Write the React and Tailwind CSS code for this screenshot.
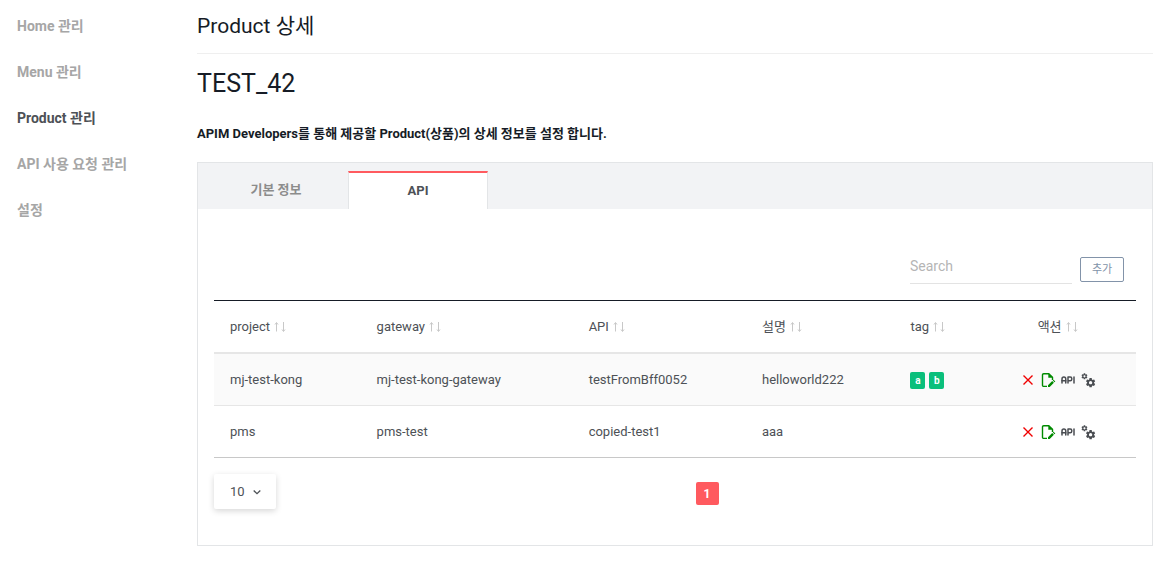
import { TbApi } from "react-icons/tb";

const menu = ["Home 관리", "Menu 관리", "Product 관리", "API 사용 요청 관리", "설정"];

const columns = [
  { name: "project", width: "w-[15.9%]" },
  { name: "gateway", width: "w-[23%]" },
  { name: "API", width: "w-[18.8%]" },
  { name: "설명", width: "w-[16.1%]" },
  { name: "tag", width: "w-[9.2%]" },
  { name: "액션", width: "w-[17%]" },
];

const rows = [
  { project: "mj-test-kong", gateway: "mj-test-kong-gateway", api: "testFromBff0052", desc: "helloworld222", tags: ["a", "b"] },
  { project: "pms", gateway: "pms-test", api: "copied-test1", desc: "aaa", tags: [] },
];

function SortIcon() {
  return (
    <svg viewBox="0 0 12 12" className="size-3 text-[#c8c8c8]" fill="none" stroke="currentColor" aria-hidden="true">
      <path d="M2.5 10.5V2M1 3.5L2.5 1.5L4 3.5M9.5 1v9M8 8.5L9.5 10.5L11 8.5" />
    </svg>
  );
}

function RemoveIcon() {
  return (
    <svg viewBox="0 0 12 12" className="size-3" fill="none" stroke="#f00000" strokeWidth="1.4" aria-hidden="true">
      <path d="M1.5 1.5l9 9M10.5 1.5l-9 9" />
    </svg>
  );
}

function FileEditIcon() {
  return (
    <svg viewBox="0 0 16 16" className="size-4" fill="none" stroke="#008a00" strokeWidth="1.4" aria-hidden="true">
      <path d="M7 14.4H3.7a1.2 1.2 0 0 1-1.2-1.2V2.9a1.2 1.2 0 0 1 1.2-1.2H8.8L12.5 5.2V8" />
      <path d="M8.3 1.3v4.4h4.7z" fill="#008a00" stroke="none" />
      <path d="M8 13.3l4.2-4.2 1.7 1.7-4.2 4.2H8zM12.8 8.5l.8-.8 1.7 1.7-.8.8z" fill="#008a00" stroke="none" />
    </svg>
  );
}

function CogsIcon() {
  return (
    <svg viewBox="0 0 24 24" className="size-4" fill="#4a4d52" aria-hidden="true">
      <path d="M15.9,18.45C17.25,18.45 18.35,17.35 18.35,16C18.35,14.65 17.25,13.55 15.9,13.55C14.54,13.55 13.45,14.65 13.45,16C13.45,17.35 14.54,18.45 15.9,18.45M21.1,16.68L22.58,17.84C22.71,17.95 22.75,18.13 22.66,18.29L21.26,20.71C21.17,20.86 21,20.92 20.83,20.86L19.09,20.16C18.73,20.44 18.33,20.67 17.91,20.85L17.64,22.7C17.62,22.87 17.47,23 17.3,23H14.5C14.32,23 14.18,22.87 14.15,22.7L13.89,20.85C13.46,20.67 13.07,20.44 12.71,20.16L10.96,20.86C10.81,20.92 10.62,20.86 10.54,20.71L9.14,18.29C9.05,18.13 9.09,17.95 9.22,17.84L10.7,16.68L10.65,16L10.7,15.31L9.22,14.16C9.09,14.05 9.05,13.86 9.14,13.71L10.54,11.29C10.62,11.13 10.81,11.07 10.96,11.13L12.71,11.84C13.07,11.56 13.46,11.32 13.89,11.15L14.15,9.29C14.18,9.13 14.32,9 14.5,9H17.3C17.47,9 17.62,9.13 17.64,9.29L17.91,11.15C18.33,11.32 18.73,11.56 19.09,11.84L20.83,11.13C21,11.07 21.17,11.13 21.26,11.29L22.66,13.71C22.75,13.86 22.71,14.05 22.58,14.16L21.1,15.31L21.15,16L21.1,16.68M6.69,8.07C7.56,8.07 8.26,7.37 8.26,6.5C8.26,5.63 7.56,4.92 6.69,4.92A1.58,1.58 0 0,0 5.11,6.5C5.11,7.37 5.82,8.07 6.69,8.07M10.03,6.94L11,7.68C11.07,7.75 11.09,7.87 11.03,7.97L10.13,9.53C10.08,9.63 9.96,9.67 9.86,9.63L8.74,9.18L8,9.62L7.81,10.81C7.79,10.92 7.7,11 7.59,11H5.79C5.67,11 5.58,10.92 5.56,10.81L5.4,9.62L4.64,9.18L3.5,9.63C3.41,9.67 3.3,9.63 3.24,9.53L2.34,7.97C2.28,7.87 2.31,7.75 2.39,7.68L3.34,6.94L3.31,6.5L3.34,6.06L2.39,5.32C2.31,5.25 2.28,5.13 2.34,5.03L3.24,3.47C3.3,3.37 3.41,3.33 3.5,3.37L4.63,3.82L5.4,3.38L5.56,2.19C5.58,2.08 5.67,2 5.79,2H7.59C7.7,2 7.79,2.08 7.81,2.19L8,3.38L8.74,3.82L9.86,3.37C9.96,3.33 10.08,3.37 10.13,3.47L11.03,5.03C11.09,5.13 11.07,5.25 11,5.32L10.03,6.06L10.06,6.5L10.03,6.94Z" />
    </svg>
  );
}

function Actions() {
  return (
    <div className="flex items-center justify-center gap-1 pt-px">
      <button type="button" aria-label="삭제" className="flex size-4 items-center justify-center"><RemoveIcon /></button>
      <button type="button" aria-label="수정" className="flex size-4 items-center justify-center"><FileEditIcon /></button>
      <button type="button" aria-label="API" className="flex size-4 items-center justify-center"><TbApi className="size-[18px] shrink-0 text-[#4a4d52]" /></button>
      <button type="button" aria-label="설정" className="flex size-4 items-center justify-center"><CogsIcon /></button>
    </div>
  );
}

export default function App() {
  return (
    <div className="flex bg-white pr-[15px] text-[13px] leading-5 text-[#4d5156] [font-family:Roboto,'Noto_Sans_CJK_KR',sans-serif]">
      <nav className="w-[197px] shrink-0 pt-4 pl-[17px]">
        <ul className="flex flex-col gap-[26px] text-sm leading-5 font-bold text-[#a6a6a6]">
          {menu.map((item) => (
            <li key={item} className={item === "Product 관리" ? "text-[#4d5156]" : ""}>
              <a href="#">{item}</a>
            </li>
          ))}
        </ul>
      </nav>

      <main className="min-w-0 flex-1 text-[#161c26]">
        <h1 className="border-b border-[#efefef] pt-[11px] pb-3 text-[21px] leading-[30px]">Product 상세</h1>
        <h2 className="pt-3 text-[25px] leading-9">TEST_42</h2>
        <p className="pt-[22px] pb-[18px] text-[13px] leading-5 font-bold">
          APIM Developers를 통해 제공할 Product(상품)의 상세 정보를 설정 합니다.
        </p>

        <section className="border border-[#e3e5e7] text-[#4d5156]">
          <div role="tablist" className="flex gap-0.5 bg-[#f2f3f5] pt-2 pl-2 font-bold">
            <button type="button" role="tab" aria-selected="false" className="h-[38px] w-[140px] text-[#8c8c8c]">기본 정보</button>
            <button type="button" role="tab" aria-selected="true" className="h-[38px] w-[140px] border-x border-t-2 border-x-[#e3e5e7] border-t-[#ff5a5f] bg-white">API</button>
          </div>

          <div className="px-4 pt-10 pb-9">
            <div className="flex items-end justify-end gap-2 pr-3 pb-4">
              <input aria-label="Search" placeholder="Search" className="h-[35px] w-[162px] border-b border-[#e3e3e3] text-sm outline-none placeholder:text-[#b5b5b5]" />
              <button type="button" className="mb-0.5 h-[25px] w-11 rounded-xs border border-[#8293a9] text-[11px] leading-4 text-[#8293a9]">추가</button>
            </div>

            <table className="w-full table-fixed border-separate border-spacing-0 text-left">
              <thead>
                <tr>
                  {columns.map(({ name, width }) => (
                    <th key={name} className={`${width} h-[54px] border-t border-b-2 border-t-[#161c26] border-b-[#e6e6e6] px-4 font-normal`}>
                      <div className={`flex items-center gap-1 ${name === "액션" ? "justify-center" : ""}`}>
                        {name}
                        <SortIcon />
                      </div>
                    </th>
                  ))}
                </tr>
              </thead>
              <tbody>
                {rows.map((row) => (
                  <tr key={row.project} className="odd:bg-[#fafafa] *:h-[52px] *:border-b *:border-[#e6e6e6] *:px-4 last:*:border-[#c8c8c8]">
                    <td>{row.project}</td>
                    <td>{row.gateway}</td>
                    <td>{row.api}</td>
                    <td>{row.desc}</td>
                    <td>
                      <div className="flex gap-1 pt-px">
                        {row.tags.map((tag) => (
                          <span key={tag} className="w-[15px] rounded-xs bg-[#0abf7b] text-center text-[10px] leading-[17px] font-bold text-white">{tag}</span>
                        ))}
                      </div>
                    </td>
                    <td><Actions /></td>
                  </tr>
                ))}
              </tbody>
            </table>

            <div className="grid grid-cols-[1fr_auto_1fr] items-center pt-4">
              <div className="relative w-[62px] rounded-xs shadow-[0_2px_6px_rgba(0,0,0,0.16)]">
                <select aria-label="페이지당 행 수" className="h-[35px] w-full appearance-none bg-transparent pl-4 outline-none" defaultValue="10">
                  <option>10</option>
                  <option>20</option>
                  <option>50</option>
                </select>
                <svg viewBox="0 0 8 8" className="pointer-events-none absolute top-3.5 right-[15px] size-2" fill="none" stroke="#4d5156" strokeWidth="1.3" aria-hidden="true">
                  <path d="M0.7 2.5L4 5.7L7.3 2.5" />
                </svg>
              </div>
              <button type="button" aria-current="page" className="mt-1 ml-16 size-[23px] rounded-xs bg-[#ff5a5f] text-xs font-bold text-white">1</button>
            </div>
          </div>
        </section>
      </main>
    </div>
  );
}
